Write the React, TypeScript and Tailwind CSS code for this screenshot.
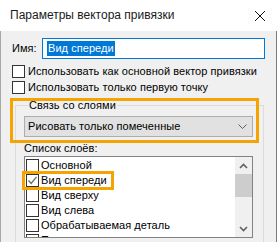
import React from "react";

function Box({ checked = false }: { checked?: boolean }) {
  return (
    <div className="w-[13px] h-[13px] shrink-0 border border-[#333333] bg-white flex items-center justify-center">
      {checked && (
        <svg width="11" height="11" viewBox="0 0 11 11">
          <polyline points="1.5,5.5 4.2,8.5 9.5,1.8" fill="none" stroke="#6b6b6b" strokeWidth="1.3" />
        </svg>
      )}
    </div>
  );
}

export default function App() {
  const items = [
    { label: "Основной", checked: false },
    { label: "Вид спереди", checked: true },
    { label: "Вид сверху", checked: false },
    { label: "Вид слева", checked: false },
    { label: "Обрабатываемая деталь", checked: false },
    { label: "Построения для вида спереди", checked: false },
  ];
  return (
    <div className="relative w-[277px] h-[242px] overflow-hidden bg-[#f0f0f0] text-[11px] tracking-[0.05px] leading-[15px] text-black font-['Liberation_Sans',Arial,sans-serif]">
      <div className="h-[31px] bg-white flex items-center justify-between pl-[10px] pr-[10px]">
        <span className="text-[12px] tracking-normal text-[#1a1a1a]">Параметры вектора привязки</span>
        <svg width="12" height="12" viewBox="0 0 12 12" className="mr-[1px]">
          <path d="M1 1 L11 11 M11 1 L1 11" stroke="#111" strokeWidth="1" />
        </svg>
      </div>
      <div className="h-[211px] border-l border-r border-l-[#a8a8a8] border-r-[#7a7a7a] flex flex-col">
        <div className="flex items-center mt-[7px] pl-[11px]">
          <span className="w-[30px]">Имя:</span>
          <div className="w-[223px] h-[21px] border border-[#0078d7] bg-white flex items-center pl-[4px]">
            <span className="bg-[#0078d7] text-white leading-[15px] px-[1px]">Вид спереди</span>
          </div>
        </div>
        <div className="flex items-center h-[15px] mt-[5px] pl-[11px]">
          <Box />
          <span className="ml-[3px] whitespace-nowrap">Использовать как основной вектор привязки</span>
        </div>
        <div className="flex items-center h-[15px] mt-[1px] pl-[11px]">
          <Box />
          <span className="ml-[3px] whitespace-nowrap">Использовать только первую точку</span>
        </div>
        <fieldset className="ml-[14px] w-[249px] h-[200px] mt-[3px] border border-[#dcdcdc] pl-[8px] pr-[10px] shrink-0">
          <legend className="ml-[4px] px-[1px] leading-[15px]">Связь со слоями</legend>
          <div className="mt-[3px] w-[229px] h-[21px] border border-[#adadad] bg-[#e1e1e1] flex items-center justify-between pl-[3px] pr-[5px]">
            <span>Рисовать только помеченные</span>
            <svg width="9" height="6" viewBox="0 0 9 6">
              <polyline points="0.5,0.5 4.5,4.5 8.5,0.5" fill="none" stroke="#606060" strokeWidth="1" />
            </svg>
          </div>
          <div className="mt-[4px] h-[15px]">Список слоёв:</div>
          <div className="w-[229px] h-[82px] border border-[#828282] bg-white flex overflow-hidden">
            <div className="flex-1 flex flex-col pt-[1px] pl-[1px] overflow-hidden">
              {items.map((it) => (
                <div key={it.label} className="flex items-center h-[15px] shrink-0">
                  <Box checked={it.checked} />
                  <span className="ml-[2px] whitespace-nowrap">{it.label}</span>
                </div>
              ))}
            </div>
            <div className="w-[17px] bg-[#f0f0f0] flex flex-col">
              <div className="h-[17px] flex items-center justify-center">
                <svg width="9" height="6" viewBox="0 0 9 6">
                  <polyline points="1,5 4.5,1.5 8,5" fill="none" stroke="#606060" strokeWidth="1.6" />
                </svg>
              </div>
              <div className="h-[23px] bg-[#cdcdcd]" />
              <div className="flex-1" />
              <div className="h-[17px] flex items-center justify-center">
                <svg width="9" height="6" viewBox="0 0 9 6">
                  <polyline points="1,1 4.5,4.5 8,1" fill="none" stroke="#606060" strokeWidth="1.6" />
                </svg>
              </div>
            </div>
          </div>
        </fieldset>
      </div>
      <div className="absolute left-[10px] top-[98px] w-[249px] h-[45px] border-[3px] border-[#f5a300] pointer-events-none" />
      <div className="absolute left-[22px] top-[171px] w-[92px] h-[19px] border-[3px] border-[#f5a300] pointer-events-none" />
    </div>
  );
}
